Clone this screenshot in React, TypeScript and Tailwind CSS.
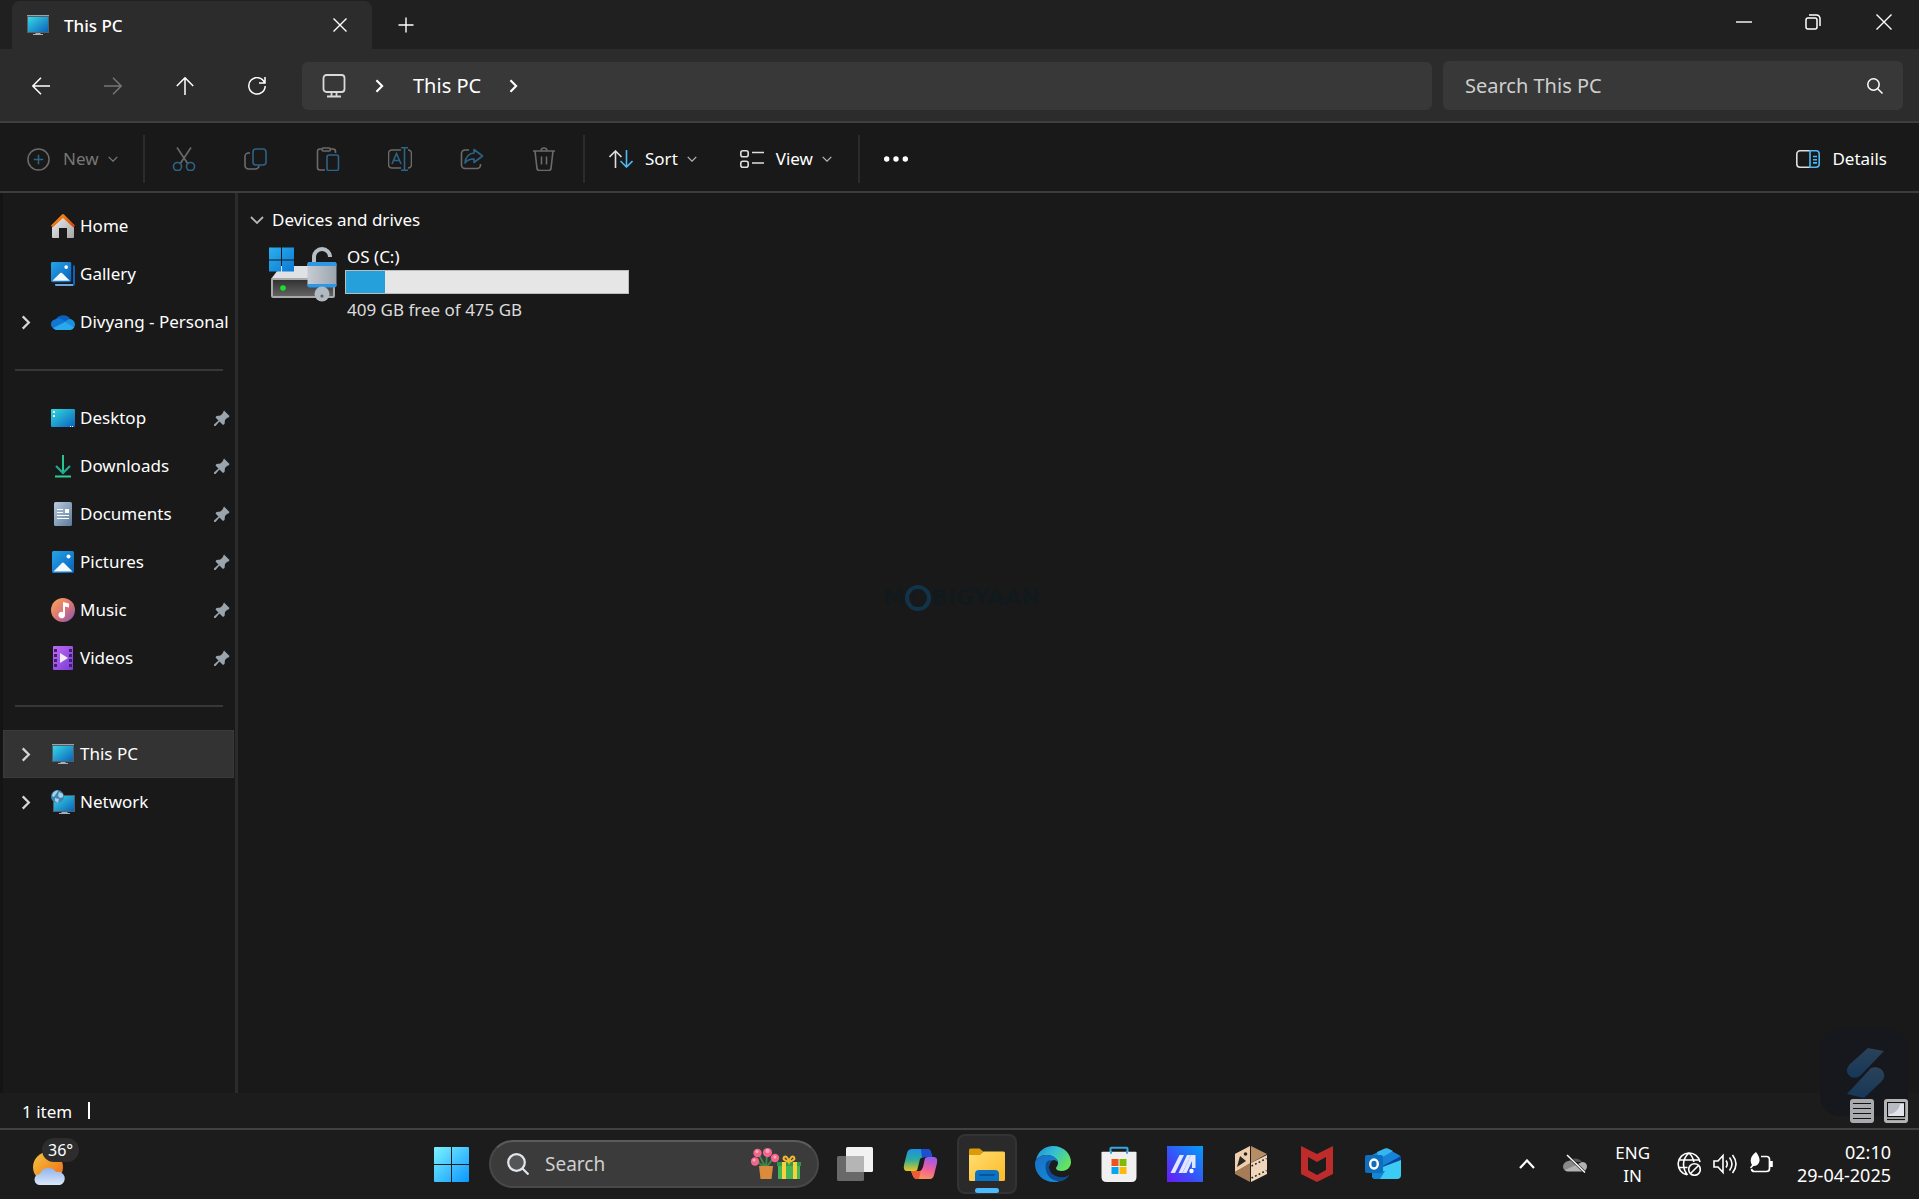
import type {ReactNode} from 'react'

function ChevronRight({className}: {className?: string}) {
  return (
    <svg viewBox="0 0 10 16" className={className} fill="none" stroke="currentColor" strokeWidth="2.4">
      <path d="M1.5 1.5 8 8l-6.5 6.5" />
    </svg>
  )
}

function ChevronDown({className}: {className?: string}) {
  return (
    <svg viewBox="0 0 14 8" className={className} fill="none" stroke="currentColor" strokeWidth="1.8">
      <path d="m1 1 6 6 6-6" />
    </svg>
  )
}

function MonitorIcon({className}: {className?: string}) {
  return (
    <svg viewBox="0 0 24 20" className={className}>
      <defs>
        <linearGradient id="screen" x1="0" y1="0" x2="1" y2="1">
          <stop offset="0" stopColor="#37d8e6" />
          <stop offset="1" stopColor="#0b62b8" />
        </linearGradient>
      </defs>
      <rect x="1" y="0" width="22" height="18" fill="#53606a" />
      <rect x="1" y="0" width="22" height="1" fill="#98a3ab" />
      <rect x="2" y="2" width="20" height="15" fill="url(#screen)" />
      <path d="M10 18h4l1 1h2v1H7v-1h2z" fill="#a9b2ba" />
    </svg>
  )
}

function HomeIcon() {
  return (
    <svg viewBox="0 0 24 24" className="size-6">
      <defs>
        <linearGradient id="wall" x1="0" y1="0" x2="1" y2="1">
          <stop offset="0" stopColor="#f1f1f1" />
          <stop offset="1" stopColor="#a5a5a5" />
        </linearGradient>
        <linearGradient id="roof" x1="0" y1="0" x2="1" y2="1">
          <stop offset="0" stopColor="#f9a01b" />
          <stop offset="1" stopColor="#cf3e06" />
        </linearGradient>
      </defs>
      <path d="M1 11 12 1l11 10v12a1 1 0 0 1-1 1h-6V14H8v10H2a1 1 0 0 1-1-1z" fill="url(#wall)" />
      <path d="m0 11.5 11-11a1.500 1.500 0 0 1 2 0l11 11-1.500 2L12 4 1.500 13.500z" fill="url(#roof)" />
    </svg>
  )
}

function PictureShape() {
  return (
    <>
      <defs>
        <linearGradient id="sky" x1="0" y1="0" x2="1" y2="1">
          <stop offset="0" stopColor="#27a4e8" />
          <stop offset="1" stopColor="#0860b8" />
        </linearGradient>
      </defs>
      <rect width="22" height="22" rx="1.500" fill="url(#sky)" />
      <path d="M1.500 20.500 10 12a1.500 1.500 0 0 1 2 0l8.500 8.500z" fill="#f2f8ff" />
      <circle cx="16.500" cy="5.500" r="2" fill="#fff" />
    </>
  )
}

function GalleryIcon() {
  return (
    <svg viewBox="0 0 24 24" className="size-6">
      <path d="M22 3a2 2 0 0 1 2 2v17a2 2 0 0 1-2 2z" fill="#0c62bf" />
      <path d="M4 22h18v2H5a1.500 1.500 0 0 1-1-2z" fill="#6fa4dd" />
      <g transform="scale(.92)">
        <PictureShape />
      </g>
    </svg>
  )
}

function PicturesIcon() {
  return (
    <svg viewBox="-1 -1 24 24" className="size-6">
      <PictureShape />
    </svg>
  )
}

function OneDriveIcon() {
  return (
    <svg viewBox="0 0 24 16" className="h-4 w-6">
      <path d="M5 6a7.500 6.500 0 0 1 14-1L14 9z" fill="#0a5fbd" />
      <path d="M4 5.500a6 6 0 0 1 5-1l9 5L4 15A5 5 0 0 1 0 10a5 5 0 0 1 4-4.500z" fill="#1177d3" />
      <path d="M13 8l5-3a5.500 5.500 0 0 1 6 5.500 5 5 0 0 1-2 4z" fill="#1a90e0" />
      <path d="M2 14 14 8l9 5.500a5 5 0 0 1-3.500 2.500H5a5 5 0 0 1-3-2z" fill="#2aa9ec" />
    </svg>
  )
}

function DesktopIcon() {
  return (
    <svg viewBox="0 0 24 18" className="h-[18px] w-6">
      <defs>
        <linearGradient id="desk" x1="0" y1="0" x2="1" y2="1">
          <stop offset="0" stopColor="#31dbe2" />
          <stop offset="1" stopColor="#0b62bd" />
        </linearGradient>
      </defs>
      <rect width="24" height="18" rx="1" fill="url(#desk)" />
      <path d="M2 2h2v2H2zM2 6h2v2H2zM19 17h1v1h-1zM21 17h1v1h-1z" fill="#fff" />
    </svg>
  )
}

function DownloadsIcon() {
  return (
    <svg viewBox="0 0 24 24" className="size-6" fill="none" strokeWidth="2">
      <path d="M12 1v17" stroke="#2bc48a" />
      <path d="m5 12 7 7 7-7" stroke="#1fae97" />
      <path d="M4 22.500h16" stroke="#2fcf92" />
    </svg>
  )
}

function DocumentsIcon() {
  return (
    <svg viewBox="0 0 24 24" className="size-6">
      <defs>
        <linearGradient id="doc" x1="0" y1="0" x2="1" y2="1">
          <stop offset="0" stopColor="#b9cbe0" />
          <stop offset="1" stopColor="#5d7a99" />
        </linearGradient>
      </defs>
      <rect x="3" width="18" height="24" rx="1.500" fill="url(#doc)" />
      <path d="M6 7h6v1H6zM6 10h6v1H6zM14 7h4v4h-4zM6 13h12v1H6zM6 16h12v1H6z" fill="#fff" />
    </svg>
  )
}

function MusicIcon() {
  return (
    <svg viewBox="0 0 24 24" className="size-6">
      <defs>
        <linearGradient id="disc" x1="0" y1="0" x2="1" y2="1">
          <stop offset="0.150" stopColor="#f29a5c" />
          <stop offset="0.550" stopColor="#d9717a" />
          <stop offset="1" stopColor="#7d57b5" />
        </linearGradient>
      </defs>
      <circle cx="12" cy="12" r="12" fill="url(#disc)" />
      <path d="M12 4l6 1.500v4L14 8.500V17a3.300 3.300 0 1 1-2-3z" fill="#fff" />
    </svg>
  )
}

function VideosIcon() {
  return (
    <svg viewBox="0 0 24 24" className="size-6">
      <defs>
        <linearGradient id="film" x1="0" y1="0" x2="1" y2="1">
          <stop offset="0" stopColor="#c06bf2" />
          <stop offset="1" stopColor="#7a3ad8" />
        </linearGradient>
      </defs>
      <rect x="2" width="20" height="24" rx="1" fill="url(#film)" />
      <path
        d="M3 3h3v3H3zM3 8h3v3H3zM3 13h3v3H3zM3 18h3v3H3zM18 3h3v3h-3zM18 8h3v3h-3zM18 13h3v3h-3zM18 18h3v3h-3z"
        fill="#41206f"
      />
      <path d="m9 7 8 5-8 5z" fill="#f0eef4" />
    </svg>
  )
}

function NetworkIcon() {
  return (
    <svg viewBox="0 0 24 24" className="size-6">
      <rect x="2" y="5" width="22" height="17" fill="#53606a" />
      <rect x="3" y="6" width="20" height="15" fill="url(#screen)" />
      <path d="M11 22h5l1 1h2v1H8v-1h2z" fill="#a9b2ba" />
      <circle cx="6.500" cy="6.500" r="6.500" fill="#3d86b4" />
      <path d="M2 3c2-2 4-3 5-2l-2 3-2 3-2-1zM8 2l4 2v3L9 8 7 6zM4 8l4 1-1 4-3-2z" fill="#a9cfe3" />
    </svg>
  )
}

function PinIcon() {
  return (
    <svg viewBox="0 0 16 16" className="size-4" fill="#9aa4ad">
      <path d="M10 .5 15.500 6l-1 1.500-1.500.5-2 2-.5 4-1.500 1L5.500 11.500 1.500 16H0v-1.500l4.500-4L1.500 7.500 2.500 6l4-.5 2-2z" />
    </svg>
  )
}

function DriveIcon() {
  return (
    <svg viewBox="0 0 68 56" className="h-14 w-[68px] shrink-0">
      <defs>
        <linearGradient id="win" x1="0" y1="0" x2="1" y2="1">
          <stop offset="0" stopColor="#2bb0ef" />
          <stop offset="1" stopColor="#0a78d4" />
        </linearGradient>
        <linearGradient id="case" x1="0" y1="0" x2="0" y2="1">
          <stop offset="0" stopColor="#2f2f2f" />
          <stop offset="1" stopColor="#666" />
        </linearGradient>
        <linearGradient id="lock" x1="0" y1="0" x2="1" y2="0">
          <stop offset="0" stopColor="#c6ccd3" />
          <stop offset="1" stopColor="#9ba4ae" />
        </linearGradient>
      </defs>
      <path d="M12 20h46l8 13H2z" fill="#dfe1e4" />
      <rect x="3" y="33" width="62" height="18" rx="1" fill="url(#case)" stroke="#a9a9a9" strokeWidth="2" />
      <circle cx="14" cy="42" r="2.800" fill="#19e02a" />
      <path d="M0 1.500h12v12H0zM13 1.500h12v12H13zM0 14.500h12v11H0zM13 14.500h12v11H13z" fill="url(#win)" />
      <path d="M45 17v-6a8 8 0 0 1 16 0" fill="none" stroke="#b5bdc5" strokeWidth="4" />
      <path d="M38.500 18q0-2 2-2h25q2 0 2 2v21q0 2-2 2h-25q-2 0-2-2z" fill="url(#lock)" />
      <path d="M38.500 20v-2q0-2 2-2h25q2 0 2 2v2zM38.500 38h29v1.500q0 2-2 2h-25q-2 0-2-2z" fill="#2e97e3" />
      <circle cx="53" cy="48" r="7.500" fill="#b1b9c1" />
      <circle cx="53" cy="50" r="1.600" fill="#5c636b" />
    </svg>
  )
}

const toolbarIcons: {label: string; icon: ReactNode}[] = [
  {
    label: 'Cut',
    icon: (
      <>
        <path d="M5 .5 16 17M19 .5 8 17" stroke="#6b6b6b" />
        <circle cx="5.500" cy="19.500" r="4" stroke="#2d6385" />
        <circle cx="18.500" cy="19.500" r="4" stroke="#2d6385" />
      </>
    ),
  },
  {
    label: 'Copy',
    icon: (
      <>
        <path d="M6 6H4.500A3.500 3.500 0 0 0 1 9.500v9A3.500 3.500 0 0 0 4.500 22h7a3.500 3.500 0 0 0 3.500-3.500" stroke="#6b6b6b" />
        <rect x="9" y="2" width="13" height="16" rx="3" stroke="#2d6385" />
      </>
    ),
  },
  {
    label: 'Paste',
    icon: (
      <>
        <path d="M9 23H4a2.500 2.500 0 0 1-2.500-2.500v-16A2.500 2.500 0 0 1 4 2h2M15 2h2a2.500 2.500 0 0 1 2.500 2.500V6" stroke="#6b6b6b" />
        <rect x="6" y="1" width="8.500" height="3" rx="1.500" stroke="#6b6b6b" />
        <rect x="11" y="8" width="11.500" height="15.500" rx="2" stroke="#2d6385" />
      </>
    ),
  },
  {
    label: 'Rename',
    icon: (
      <>
        <path d="M13 3H4a3.500 3.500 0 0 0-3.500 3.500v11A3.500 3.500 0 0 0 4 21h9M20 3a3.500 3.500 0 0 1 3.500 3.500v11A3.500 3.500 0 0 1 20 21" stroke="#6b6b6b" />
        <path d="M16.500 1v22M13 .8h7M13 23.200h7M4 17 8.500 6.500 13 17M5.500 13.500h6" stroke="#2d6385" />
      </>
    ),
  },
  {
    label: 'Share',
    icon: (
      <>
        <path d="M9 3H5a3.500 3.500 0 0 0-3.500 3.500v11.500A3.500 3.500 0 0 0 5 21.500h12a3.500 3.500 0 0 0 3.500-3.500v-1" stroke="#6b6b6b" />
        <path d="M14 2.500 22.500 9 14 15.500V12c-4 0-7 1-9 4 .5-6 4-9.500 9-10z" stroke="#2d6385" strokeLinejoin="round" />
      </>
    ),
  },
  {
    label: 'Delete',
    icon: (
      <path d="M1 4h22M9 4a3 3 0 0 1 6 0M3 4l2 17.500A2.500 2.500 0 0 0 7.500 23.500h9A2.500 2.500 0 0 0 19 21.500L21 4M9.500 9.500v8M14.500 9.500v8" stroke="#6b6b6b" />
    ),
  },
]

type Place = {name: string; icon: ReactNode; expandable?: boolean; pinned?: boolean; selected?: boolean}

const placeGroups: Place[][] = [
  [
    {name: 'Home', icon: <HomeIcon />},
    {name: 'Gallery', icon: <GalleryIcon />},
    {name: 'Divyang - Personal', icon: <OneDriveIcon />, expandable: true},
  ],
  [
    {name: 'Desktop', icon: <DesktopIcon />, pinned: true},
    {name: 'Downloads', icon: <DownloadsIcon />, pinned: true},
    {name: 'Documents', icon: <DocumentsIcon />, pinned: true},
    {name: 'Pictures', icon: <PicturesIcon />, pinned: true},
    {name: 'Music', icon: <MusicIcon />, pinned: true},
    {name: 'Videos', icon: <VideosIcon />, pinned: true},
  ],
  [
    {name: 'This PC', icon: <MonitorIcon className="h-5 w-6" />, expandable: true, selected: true},
    {name: 'Network', icon: <NetworkIcon />, expandable: true},
  ],
]

function TitleBar() {
  return (
    <header className="flex h-[49px] bg-[#202020] pl-3">
      <div className="mt-px flex w-[360px] items-center rounded-t-lg bg-[#2c2c2c] pr-4 pl-3.5">
        <MonitorIcon className="h-5 w-6" />
        <h1 className="ml-[14px] pt-px text-[17px] leading-6 font-medium">This PC</h1>
        <button aria-label="Close tab" className="ml-auto flex size-8 items-center justify-center">
          <svg viewBox="0 0 14 14" className="size-3.5" stroke="currentColor" strokeWidth="1.4">
            <path d="m.5.5 13 13m0-13-13 13" />
          </svg>
        </button>
      </div>
      <button aria-label="New tab" className="ml-4 flex w-9 items-center justify-center">
        <svg viewBox="0 0 16 16" className="size-4" stroke="currentColor" strokeWidth="1.4">
          <path d="M8 .5v15M.5 8h15" />
        </svg>
      </button>
      <div className="ml-auto flex h-[43px]">
        <button aria-label="Minimize" className="flex w-[69px] items-center justify-center">
          <svg viewBox="0 0 16 16" className="size-4" stroke="currentColor" strokeWidth="1.4">
            <path d="M0 8h16" />
          </svg>
        </button>
        <button aria-label="Restore" className="flex w-[70px] items-center justify-center">
          <svg viewBox="0 0 16 16" className="size-4" fill="none" stroke="currentColor" strokeWidth="1.5">
            <rect x="1" y="4" width="11" height="11" rx="2" />
            <path d="M4 1h7.500A3.500 3.500 0 0 1 15 4.500V12" />
          </svg>
        </button>
        <button aria-label="Close" className="flex w-[71px] items-center justify-center">
          <svg viewBox="0 0 16 16" className="size-4" stroke="currentColor" strokeWidth="1.4">
            <path d="m.5.5 15 15m0-15-15 15" />
          </svg>
        </button>
      </div>
    </header>
  )
}

function NavigationBar() {
  return (
    <div className="flex items-center border-b-2 border-[#3f3f3f] bg-[#2c2c2c] pt-3 pr-4 pb-[11px] pl-[5px]">
      <div className="mr-[9px] flex">
        <button aria-label="Back" className="flex h-12 w-[72px] items-center justify-center">
          <svg viewBox="0 0 18 18" className="size-[18px]" fill="none" stroke="currentColor" strokeWidth="1.5">
            <path d="M18 9H1M9 .8.8 9 9 17.200" />
          </svg>
        </button>
        <button aria-label="Forward" disabled className="flex h-12 w-[72px] items-center justify-center text-[#767676]">
          <svg viewBox="0 0 18 18" className="size-[18px]" fill="none" stroke="currentColor" strokeWidth="1.5">
            <path d="M0 9h17M9 .8 17.200 9 9 17.200" />
          </svg>
        </button>
        <button aria-label="Up" className="flex h-12 w-[72px] items-center justify-center">
          <svg viewBox="0 0 18 18" className="size-[18px]" fill="none" stroke="currentColor" strokeWidth="1.5">
            <path d="M9 18V1M.8 9 9 .8 17.200 9" />
          </svg>
        </button>
        <button aria-label="Refresh" className="flex h-12 w-[72px] items-center justify-center">
          <svg viewBox="0 0 18 18" className="size-[18px]" fill="none" stroke="currentColor" strokeWidth="1.5">
            <path d="M16.500 5.500A8.200 8.200 0 1 0 17.200 9M17 0v6h-6" />
          </svg>
        </button>
      </div>
      <nav aria-label="Address" className="flex h-12 flex-1 items-center rounded-md bg-[#383838] pl-5">
        <svg viewBox="0 0 24 24" className="size-6" fill="none" stroke="#dadada" strokeWidth="1.8">
          <rect x="1.500" y="1" width="21" height="17" rx="3" />
          <path d="M9.500 18v4M14.500 18v4M5 22.500h14" />
        </svg>
        <ChevronRight className="ml-[29px] h-[14px] w-[9px]" />
        <a href="#this-pc" className="ml-[29px] text-[20px] leading-7">
          This PC
        </a>
        <ChevronRight className="ml-7 h-[14px] w-[9px]" />
      </nav>
      <label className="ml-[11px] flex h-[49px] w-[460px] items-center rounded-md bg-[#383838] pr-5 pl-[22px]">
        <span className="sr-only">Search in folder</span>
        <input
          type="text"
          placeholder="Search This PC"
          className="h-8 min-w-0 flex-1 bg-transparent text-[20px] leading-8 outline-none placeholder:text-[#cfcfcf]"
        />
        <svg viewBox="0 0 16 16" className="size-4" fill="none" stroke="currentColor" strokeWidth="1.5">
          <circle cx="6.500" cy="6.500" r="5.700" />
          <path d="m10.500 10.500 5 5" />
        </svg>
      </label>
    </div>
  )
}

function Toolbar() {
  return (
    <div role="toolbar" className="flex items-center border-b-2 border-[#3d3d3d] pt-3 pb-2 text-[17px] leading-6">
      <button disabled className="flex h-12 w-[143px] items-center pl-[27px] text-[#777]">
        <svg viewBox="0 0 24 24" className="size-[23px]" fill="none" strokeWidth="1.6">
          <circle cx="12" cy="12" r="11" stroke="#6b6b6b" />
          <path d="M12 7v10M7 12h10" stroke="#2d6385" />
        </svg>
        <span className="ml-[13px]">New</span>
        <ChevronDown className="ml-[9px] h-1.5 w-2.5" />
      </button>
      <span className="h-12 w-0.5 bg-[#2b2b2b]" />
      <div className="ml-[3px] flex">
        {toolbarIcons.map(({label, icon}) => (
          <button key={label} aria-label={label} disabled className="flex h-12 w-[72px] items-center justify-center">
            <svg viewBox="0 0 24 24" className="size-6" fill="none" strokeWidth="1.6">
              {icon}
            </svg>
          </button>
        ))}
      </div>
      <span className="ml-[3px] h-12 w-0.5 bg-[#2b2b2b]" />
      <button className="ml-6 flex h-12 items-center">
        <svg viewBox="0 0 24 18" className="h-[18px] w-6" fill="none" strokeWidth="1.6">
          <path d="M6.500 18V1M.5 7l6-6 6 6" stroke="#dedede" />
          <path d="M17.500 0v17M11.500 11l6 6 6-6" stroke="#4cb9f5" />
        </svg>
        <span className="ml-3">Sort</span>
        <ChevronDown className="ml-[9px] h-1.5 w-2.5 text-[#b5b5b5]" />
      </button>
      <button className="ml-[43px] flex h-12 items-center">
        <svg viewBox="0 0 24 18" className="h-[18px] w-6" fill="none" stroke="#dedede" strokeWidth="1.6">
          <rect x=".8" y=".8" width="7.400" height="6" rx="2" />
          <rect x=".8" y="11.200" width="7.400" height="6" rx="2" />
          <path d="M12 2.500h12M12 13h12" />
        </svg>
        <span className="ml-3">View</span>
        <ChevronDown className="ml-[9px] h-1.5 w-2.5 text-[#b5b5b5]" />
      </button>
      <span className="ml-[26px] h-12 w-0.5 bg-[#2b2b2b]" />
      <button aria-label="See more" className="ml-3 flex size-12 items-center justify-center">
        <svg viewBox="0 0 24 6" className="h-1.5 w-6" fill="currentColor">
          <circle cx="2.700" cy="3" r="2.700" />
          <circle cx="12" cy="3" r="2.700" />
          <circle cx="21.300" cy="3" r="2.700" />
        </svg>
      </button>
      <button className="mr-8 ml-auto flex h-12 items-center">
        <svg viewBox="0 0 24 18" className="h-[18px] w-6" fill="none" strokeWidth="1.6">
          <path d="M14 .8H4A3.200 3.200 0 0 0 .8 4v10A3.200 3.200 0 0 0 4 17.200h10" stroke="#dedede" />
          <path d="M14 .8h6A3.200 3.200 0 0 1 23.200 4v10a3.200 3.200 0 0 1-3.200 3.200h-6zM17 6.500h4M17 9.700h4M17 12.900h4" stroke="#4cb9f5" />
        </svg>
        <span className="ml-3">Details</span>
      </button>
    </div>
  )
}

function Sidebar() {
  return (
    <aside className="w-[238px] shrink-0 border-r-[3px] border-l-[3px] border-r-[#2b2b2b] border-l-[#141414] pt-[9px] pr-px text-[17px] leading-6">
      {placeGroups.map((group, i) => (
        <div key={i}>
          {i > 0 && (
            <div className="flex h-12 items-center pr-[11px] pl-3">
              <hr className="w-full border-t-2 border-[#373737]" />
            </div>
          )}
          <ul>
            {group.map((place) => (
              <li
                key={place.name}
                className={`flex h-12 items-center ${place.selected ? 'border border-[#3a3a3a] bg-[#333]' : 'border border-transparent'}`}
              >
                <span className="flex w-[47px] shrink-0 pl-[17px]">
                  {place.expandable && (
                    <button aria-label={`Expand ${place.name}`}>
                      <ChevronRight className="h-[15px] w-2.5 text-[#d5d5d5]" />
                    </button>
                  )}
                </span>
                <a href="#place" className="flex items-center gap-[5px] whitespace-nowrap">
                  {place.icon}
                  {place.name}
                </a>
                {place.pinned && (
                  <button aria-label={`Unpin ${place.name}`} className="mr-[3px] ml-auto">
                    <PinIcon />
                  </button>
                )}
              </li>
            ))}
          </ul>
        </div>
      ))}
    </aside>
  )
}

function Watermark() {
  return (
    <div className="pointer-events-none absolute inset-x-0 top-[391px] flex items-center justify-center pr-[234px] font-['DejaVu_Sans',sans-serif] text-[22px] leading-7 font-bold text-[#11191d]">
      M
      <svg viewBox="0 0 26 26" className="size-[26px]" fill="none">
        <circle cx="13" cy="13" r="11" stroke="#12344a" strokeWidth="4" />
        <rect x="8.500" y="5.500" width="9" height="15" stroke="#131b1f" strokeWidth="1.5" />
      </svg>
      BIGYAAN
    </div>
  )
}

function CornerLogo() {
  return (
    <svg viewBox="0 0 88 88" className="pointer-events-none absolute right-[11px] bottom-3 size-[88px]">
      <defs>
        <linearGradient id="blade" x1="0" y1="0" x2="0" y2="1">
          <stop offset="0" stopColor="#2c4258" />
          <stop offset="1" stopColor="#153759" />
        </linearGradient>
      </defs>
      <rect width="88" height="88" rx="20" fill="#16181d" />
      <path d="m48 20 16 3-22 23c-5 6-12 4-14 0-2-3-1-7 2-10z" fill="url(#blade)" />
      <path d="M51 40c6-2 12 1 13 6 1 3-1 6-3 8L44 70l-17-4z" fill="url(#blade)" />
    </svg>
  )
}

function DriveList() {
  const total = 475
  const free = 409
  return (
    <main className="relative flex-1 pt-[15px] pl-3 text-[17px] leading-6">
      <button className="flex items-center">
        <ChevronDown className="h-2 w-[14px] text-[#b5b5b5]" />
        <span className="ml-2">Devices and drives</span>
      </button>
      <a href="#drive-c" className="mt-3.5 ml-[19px] flex w-[360px] gap-2">
        <DriveIcon />
        <div className="flex-1">
          <p className="px-0.5 leading-[22px]">OS (C:)</p>
          <div
            role="progressbar"
            aria-label="Used space"
            aria-valuenow={total - free}
            aria-valuemax={total}
            className="mt-0.5 h-6 border border-[#bcbcbc] bg-[#e6e6e6]"
          >
            <div className="h-full bg-[#26a0da]" style={{width: `${((total - free) / total) * 100}%`}} />
          </div>
          <p className="mt-1 px-0.5 text-[#dcdcdc]">
            {free} GB free of {total} GB
          </p>
        </div>
      </a>
      <Watermark />
    </main>
  )
}

function StatusBar() {
  return (
    <footer className="relative flex h-[37px] items-center border-b-2 border-[#414141] bg-[#1c1c1c] pr-[11px] pl-[22px]">
      <CornerLogo />
      <span className="pt-0.5 text-[17px] leading-6">1 item</span>
      <span className="ml-4 h-[17px] w-0.5 bg-white" />
      <div className="relative ml-auto flex gap-2.5">
        <button aria-label="Details view">
          <svg viewBox="0 0 24 24" className="size-6">
            <rect width="24" height="24" rx="3" fill="#a9aaad" />
            <path d="M3 4.500h18M3 9.500h18M3 14.500h18M3 19.500h18" stroke="#111" strokeWidth="1.2" />
          </svg>
        </button>
        <button aria-label="Large icons view">
          <svg viewBox="0 0 24 24" className="size-6">
            <rect width="24" height="24" rx="3" fill="#b5b5b7" />
            <rect x="3.600" y="3.600" width="17" height="14" fill="#e2e4e9" stroke="#111" strokeWidth="1.2" />
            <path d="M4.200 17V15c7 0 11-5 12-10.800H4.200z" fill="#b9bbc2" />
            <path d="M3 20.500h18" stroke="#111" strokeWidth="1.2" />
          </svg>
        </button>
      </div>
    </footer>
  )
}

const taskbarApps: {label: string; icon: ReactNode; active?: boolean}[] = [
  {
    label: 'Task View',
    icon: (
      <>
        <rect x="9" y="1" width="27" height="25" rx="1.500" fill="#f2f2f2" />
        <rect x="0" y="10" width="27" height="25" rx="1.500" fill="#777" fillOpacity=".85" />
        <path d="M9 10h18v16H9z" fill="#b5b5b5" />
      </>
    ),
  },
  {
    label: 'Copilot',
    icon: (
      <>
        <defs>
          <linearGradient id="cpA" x1="0" y1="0" x2="0" y2="1">
            <stop offset="0" stopColor="#1b8fe8" />
            <stop offset=".5" stopColor="#2fae9b" />
            <stop offset="1" stopColor="#e8c61e" />
          </linearGradient>
          <linearGradient id="cpB" x1="0.600" y1="0" x2="0.300" y2="1">
            <stop offset="0" stopColor="#9a5bea" />
            <stop offset=".5" stopColor="#ef5f9b" />
            <stop offset="1" stopColor="#fb9a55" />
          </linearGradient>
        </defs>
        <path d="M9 3h15q3 0 4 3l1 5h-7q-3 0-4 3l-2 7q-1 4-4 4H4q-4 0-3-6L4 7q1-4 5-4z" fill="url(#cpA)" />
        <path d="M27 33H14q-3 0-4-3l-2-5h6q4 0 5-4l2-7q1-3 4-3h6q4 0 3 6l-3 12q-1 4-4 4z" fill="url(#cpB)" />
        <path d="M18 3h6q3 0 4 3l1.500 5H22q-2 0-3 2z" fill="#1d4fd0" />
        <path d="M8 25h6q3 0 4-2l-2 10h-2q-3 0-4-3z" fill="#f05a38" />
        <path d="m17 13-3 12h3q2-1 3-4l2-9q-4-1-5 1z" fill="#1c1c1c" />
      </>
    ),
  },
  {
    label: 'File Explorer',
    active: true,
    icon: (
      <>
        <defs>
          <linearGradient id="folder" x1="0" y1="0" x2="1" y2="1">
            <stop offset="0" stopColor="#ffdf74" />
            <stop offset="1" stopColor="#fdb924" />
          </linearGradient>
        </defs>
        <path d="M0 4q0-1.500 1.500-1.500h9L15 6v4H0z" fill="#dd9a08" />
        <path d="M0 9h11l4-3.500h19.500Q36 5.500 36 7v26.500q0 1.500-1.500 1.500h-33Q0 35 0 33.500z" fill="url(#folder)" />
        <path d="M6 35v-7q0-4 4-4h16q4 0 4 4v7z" fill="#0c73c4" />
        <path d="M10.500 29h15" stroke="#0a4a86" strokeWidth="1.5" />
      </>
    ),
  },
  {
    label: 'Microsoft Edge',
    icon: (
      <>
        <defs>
          <linearGradient id="edgeTop" x1="0" y1="0" x2="1" y2=".6">
            <stop offset="0" stopColor="#1a8ad8" />
            <stop offset=".5" stopColor="#35c1d0" />
            <stop offset="1" stopColor="#66e35a" />
          </linearGradient>
          <linearGradient id="edgeLow" x1="0" y1="0" x2="1" y2="1">
            <stop offset="0" stopColor="#1a6fc4" />
            <stop offset="1" stopColor="#1190e0" />
          </linearGradient>
        </defs>
        <path d="M1 14C3 5 10 0 18 0c11 0 18 8 18 16 0 5-4 9-9 9-4 0-6-1-6-3 0-1 2-2 2-5 0-4-5-8-11-8-5 0-9 2-11 5z" fill="url(#edgeTop)" />
        <path d="M1 14c2-3 6-5 11-5 6 0 10 3 11 7-1-1-3-2-4-2-3 0-5 4-5 8 0 7 7 10 12 10 3 0 6-1 8-3-4 5-9 7-15 7C8 36 0 28 0 18c0-1 0-3 1-4z" fill="url(#edgeLow)" />
        <path d="M11 17c-2 8 3 18 13 18 4 0 8-2 10-6-3 2-5 3-9 2-7-1-11-5-11-10 0-3 1-5 3-7-3 0-5 1-6 3z" fill="#0d4c95" />
      </>
    ),
  },
  {
    label: 'Microsoft Store',
    icon: (
      <>
        <path d="M9.500 9V2.500q0-.8.8-.8h15.400q.8 0 .8.8V9" fill="none" stroke="#2fa9e6" strokeWidth="2" />
        <path d="M.5 6.500q0-.8.8-.8h33.400q.8 0 .8.8V31q0 5-5 5h-25q-5 0-5-5z" fill="#f0f0f0" />
        <path d="M9 5.700h2v2H9zM25 5.700h2v2h-2z" fill="#2fa9e6" />
        <path d="M10.500 13h7v7h-7z" fill="#f1511b" />
        <path d="M18.500 13h7v7h-7z" fill="#80bb03" />
        <path d="M10.500 21h7v7h-7z" fill="#05a6f0" />
        <path d="M18.500 21h7v7h-7z" fill="#fcba08" />
      </>
    ),
  },
  {
    label: 'MyASUS',
    icon: (
      <>
        <defs>
          <linearGradient id="asus" x1="1" y1="0" x2="0" y2="1">
            <stop offset="0" stopColor="#049df5" />
            <stop offset=".6" stopColor="#3a4df8" />
            <stop offset="1" stopColor="#6c18f5" />
          </linearGradient>
        </defs>
        <rect width="36" height="36" fill="url(#asus)" />
        <path d="M12.500 9h4.500L8 27H3.500zM20 9h4l-8.500 18H11.500z" fill="#e3e6ff" />
        <path d="M24 9h4.500v13H25v-7l-5.500 12h-4z" fill="#e3e6ff" />
        <circle cx="24.500" cy="25" r="2.200" fill="#fff" />
      </>
    ),
  },
  {
    label: 'Media Box',
    icon: (
      <>
        <path d="m18 0 16 8-16 9L2 8z" fill="#b58e66" />
        <path d="M2 8 17 0v18L2 26z" fill="#efcfb0" />
        <path d="m2 26 15-9v19L2 28z" fill="#a57c55" />
        <path d="m18 17 16-8v19l-16 8z" fill="#f2d6bb" />
        <path d="m18.500 20 15-7.500M18.500 32l15-7.500" stroke="#2a2623" strokeWidth="1.6" strokeDasharray="1.8 2.200" />
        <path d="m4 21 3-11 6 5z" fill="#2a2623" />
        <circle cx="12.500" cy="8" r="1.800" fill="#2a2623" />
        <path d="M17.500 0v36" stroke="#1c1c1c" />
      </>
    ),
  },
  {
    label: 'McAfee',
    icon: (
      <path
        d="m2 0 16 8 16-8v28l-16 8-16-8zM9 11v13l9 5 9-5V11l-9 5z"
        fill="#be2b2b"
        fillRule="evenodd"
      />
    ),
  },
  {
    label: 'Outlook',
    icon: (
      <>
        <path d="m7 9 12-6q2-1 4 0l11 6q2 1 2 3v12H7z" fill="#1583d8" />
        <path d="m12 6 8-3.500q1.500-.5 3 0l5 2.500L14 13z" fill="#35b6ee" />
        <path d="m36 10-22 12v6l22-12z" fill="#0a439c" />
        <path d="M7 25 36 14v15q0 4-4 4H11q-4 0-4-4z" fill="#3bcbf5" />
        <path d="M7 25h13l-5 8h-4q-4 0-4-4z" fill="#1387d6" />
        <rect y="9" width="18" height="18" rx="2" fill="#106ebe" />
        <ellipse cx="9" cy="18" rx="3.800" ry="4.500" fill="none" stroke="#fff" strokeWidth="2.4" />
      </>
    ),
  },
]

function SearchDoodle() {
  return (
    <svg viewBox="0 0 50 32" className="h-8 w-[50px] shrink-0">
      <path d="M15 20 5 13M15 20 7 5M15 20l1-15M15 20l8-11" stroke="#3c8a4c" strokeWidth="1.8" />
      <g fill="#f2668b">
        <circle cx="4" cy="13.500" r="4.200" />
        <circle cx="6.500" cy="5" r="4.200" />
        <circle cx="16.500" cy="4.600" r="4.600" />
        <circle cx="24" cy="10" r="4.200" />
      </g>
      <g fill="#fbaec0">
        <circle cx="3" cy="12" r="1.500" />
        <circle cx="6" cy="3.500" r="1.500" />
        <circle cx="16.500" cy="3" r="2" />
        <circle cx="24" cy="9" r="1.500" />
      </g>
      <path d="M8 18h14l-1.500 13h-11z" fill="#dc8a3c" />
      <path d="M26 14h24v4H26z" fill="#2d9a48" />
      <path d="M27 18h22v13H27z" fill="#43b556" />
      <path d="M31 14h4v17h-4zM42 14h4v17h-4z" fill="#f8d23c" />
      <path d="M38 14q-7-2-5-5 3-2 5 5 2-7 5-5 2 3-5 5z" fill="none" stroke="#f5b92e" strokeWidth="2" />
    </svg>
  )
}

function Taskbar() {
  return (
    <footer className="flex h-[69px] shrink-0 items-center bg-[#1c1c1c] pb-px">
      <button aria-label="Weather, 36 degrees" className="relative ml-8 h-12 w-12">
        <svg viewBox="0 0 36 36" className="mt-2.5 size-9">
          <defs>
            <linearGradient id="sun" x1="0" y1="0" x2="1" y2="1">
              <stop offset="0" stopColor="#f5c342" />
              <stop offset="1" stopColor="#ee6a10" />
            </linearGradient>
            <linearGradient id="cloud" x1="0" y1="0" x2="0" y2="1">
              <stop offset="0" stopColor="#8fb4ee" />
              <stop offset="1" stopColor="#dce8fb" />
            </linearGradient>
          </defs>
          <circle cx="16" cy="16" r="15" fill="url(#sun)" />
          <path d="M8 34a5 5 0 0 1 0-11 9 9 0 0 1 16-2 6.500 6.500 0 0 1 4 13z" fill="url(#cloud)" />
        </svg>
        <span className="absolute -top-0.5 left-2.5 rounded-full bg-[#2d2d2d] px-1.5 text-[16px] leading-6">36°</span>
      </button>
      <div className="ml-[344px] flex shrink-0 items-center">
        <button aria-label="Start" className="flex h-[60px] w-[54px] items-center justify-center">
          <svg viewBox="0 0 35 35" className="size-[35px]">
            <defs>
              <linearGradient id="start" gradientUnits="userSpaceOnUse" x1="0" y1="0" x2="35" y2="35">
                <stop offset="0" stopColor="#7cf3ff" />
                <stop offset="1" stopColor="#0a96ff" />
              </linearGradient>
            </defs>
            <path d="M1 0h16v17H0V1q0-1 1-1zM18 0h16q1 0 1 1v16H18zM0 18h17v17H1q-1 0-1-1zM18 18h17v16q0 1-1 1H18z" fill="url(#start)" />
          </svg>
        </button>
        <label className="ml-[11px] flex h-12 w-[330px] items-center rounded-full border-2 border-t-[#5c5c5c] border-r-[#484848] border-b-[#484848] border-l-[#484848] bg-[#3b3b3b] pr-4 pl-4">
          <svg viewBox="0 0 22 22" className="size-[22px] shrink-0" fill="none" stroke="#e3e6ea" strokeWidth="2.2">
            <circle cx="9.500" cy="9.500" r="8.300" fill="#555" />
            <path d="m15.500 15.500 6 6" />
          </svg>
          <span className="sr-only">Search apps and files</span>
          <input
            type="text"
            placeholder="Search"
            className="ml-4 h-8 min-w-0 flex-1 bg-transparent text-[19px] leading-8 outline-none placeholder:text-[#cfcfcf]"
          />
          <SearchDoodle />
        </label>
        <div className="ml-1.5 flex gap-1.5">
          {taskbarApps.map((app) => (
            <button
              key={app.label}
              aria-label={app.label}
              className={`relative flex size-[60px] items-center justify-center rounded-lg ${app.active ? 'border-2 border-[#333] bg-[#2a2a2a]' : ''}`}
            >
              <svg viewBox="0 0 36 36" className="size-9">
                {app.icon}
              </svg>
              {app.active && <span className="absolute -bottom-px h-[5px] w-6 rounded-full bg-[#4cb9ff]" />}
            </button>
          ))}
        </div>
      </div>
      <div className="ml-auto flex shrink-0 items-center pr-7 text-[17px] leading-[23px]">
        <button aria-label="Show hidden icons">
          <svg viewBox="0 0 16 10" className="h-2.5 w-4" fill="none" stroke="currentColor" strokeWidth="2.2">
            <path d="m1 9 7-7.500L15 9" />
          </svg>
        </button>
        <button aria-label="OneDrive, not signed in" className="ml-7">
          <svg viewBox="0 0 24 20" className="h-5 w-6">
            <path d="M5 8a8 7 0 0 1 14 0z" fill="#555" />
            <path d="M5 7q8-1 10 5L3 17q-3-1-3-5 1-4 5-5z" fill="#8a8a8a" />
            <path d="M19 8q5 0 5 5-1 4-4 4.500H5q-2 0-3-1.500l13-6z" fill="#b2b2b2" />
            <path d="m4 1 18 17.500" stroke="#1c1c1c" strokeWidth="2.5" />
            <path d="m4 1 18 17.500" stroke="#fff" strokeWidth="1.5" />
          </svg>
        </button>
        <button className="ml-7 text-center">
          ENG
          <br />
          IN
        </button>
        <button aria-label="Network, volume and battery" className="ml-[27px] flex gap-3">
          <svg viewBox="0 0 24 24" className="size-6" fill="none" stroke="currentColor" strokeWidth="1.6">
            <path d="M23 10A11 11 0 1 0 10 22.800M1.800 8h20.500M1.500 15.500h9M12 1c-7 6-7 15-1.500 22M12 1c3 3 4.500 6 4.800 9" />
            <circle cx="17.500" cy="17.500" r="5.800" />
            <path d="m13.500 21.500 8-8" />
          </svg>
          <svg viewBox="0 0 24 24" className="size-6" fill="none" stroke="currentColor" strokeWidth="1.6">
            <path d="M1 9h4l5-5.500v17L5 15H1zM13 8.500q2.500 3.500 0 7M16.500 5.500q5 6.500 0 13M19.500 3q7 9 0 18" />
          </svg>
          <svg viewBox="0 0 24 24" className="size-6" fill="none" stroke="currentColor" strokeWidth="1.7">
            <path d="M12 4.500h5.500A3 3 0 0 1 20.500 7.500v9a3 3 0 0 1-3 3H5.500A3 3 0 0 1 2.500 17" />
            <path d="M22.300 9v6" strokeWidth="3" />
            <path d="M7 0q4 5 3.500 9-1 5-6 5L2 16.500l-1-1 2-2.500Q-1 6 7 0z" fill="currentColor" stroke="none" />
          </svg>
        </button>
        <button className="ml-6 text-right text-[18px]">
          02:10
          <br />
          29-04-2025
        </button>
      </div>
    </footer>
  )
}

export default function App() {
  return (
    <div className="flex min-h-screen flex-col bg-[#191919] font-['Noto_Sans','Open_Sans',sans-serif] text-white">
      <TitleBar />
      <NavigationBar />
      <Toolbar />
      <div className="flex flex-1">
        <Sidebar />
        <DriveList />
      </div>
      <StatusBar />
      <Taskbar />
    </div>
  )
}
